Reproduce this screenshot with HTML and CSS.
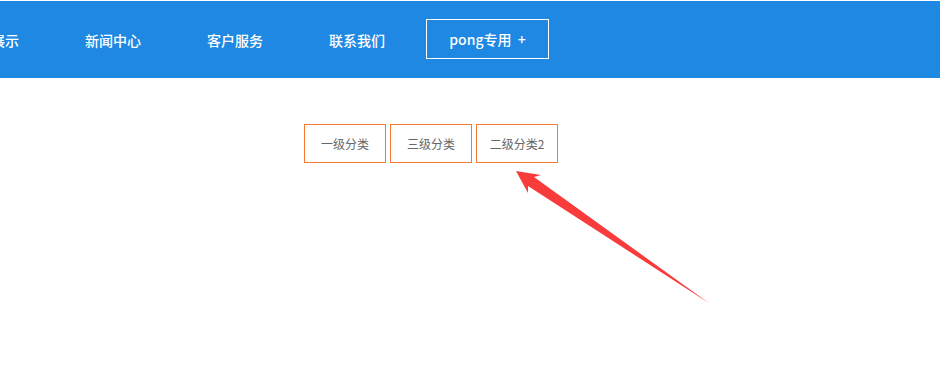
FILE: index.html
```html
<!DOCTYPE html>
<html lang="zh-CN">
<head>
<meta charset="UTF-8" />
<title>分类</title>
<link rel="stylesheet" href="styles.css">
</head>
<body>
  <div class="header">
    <ul class="nav">
      <li>产品展示</li>
      <li>新闻中心</li>
      <li>客户服务</li>
      <li>联系我们</li>
      <li class="nav-box">pong专用&nbsp;&nbsp;+</li>
    </ul>
  </div>

  <div class="tabs">
    <a class="tab">一级分类</a>
    <a class="tab">三级分类</a>
    <a class="tab">二级分类2</a>
  </div>

  <!-- annotation arrow -->
  <svg class="arrow" width="940" height="373" viewBox="0 0 940 373">
    <polygon points="516,171 541,175 534,177 709.5,303.5 528,186 528,193" fill="#f83c3c" />
  </svg>
</body>
</html>
```

FILE: styles.css
```css
body {
  margin: 0;
  padding-top: 1px;
  background: #fff;
  font-family: "Microsoft YaHei", "Noto Sans CJK SC", "Noto Sans", sans-serif;
  overflow: hidden;
}
.header {
  background: #1e88e2;
  height: 77px;
  overflow: hidden;
}
.nav {
  list-style: none;
  margin: 0 0 0 -70px;
  padding: 0;
  display: flex;
  align-items: center;
  height: 100%;
}
.nav li {
  width: 122px;
  flex-shrink: 0;
  text-align: center;
  color: #fff;
  font-size: 14px;
  font-weight: 500;
  white-space: nowrap;
}
.nav li.nav-box {
  margin-left: 8px;
  width: 121px;
  height: 38px;
  line-height: 38px;
  border: 1px solid #fff;
  margin-top: -1px;
}
.tabs {
  display: flex;
  gap: 4px;
  margin: 46px 0 0 304px;
}
.tab {
  display: block;
  width: 80px;
  height: 37px;
  line-height: 37px;
  border: 1px solid #f77a30;
  text-align: center;
  font-size: 12px;
  color: #666;
}
.arrow {
  position: absolute;
  left: 0;
  top: 0;
  pointer-events: none;
}
```
